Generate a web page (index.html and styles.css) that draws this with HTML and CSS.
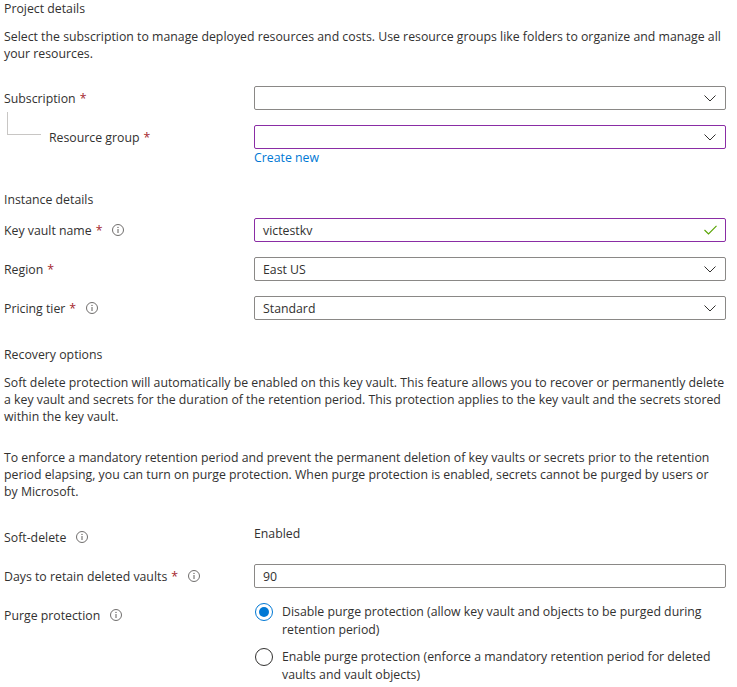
FILE: index.html
```html
<!DOCTYPE html>
<html lang="en">
<head>
<meta charset="utf-8">
<title>Create a key vault</title>
<link rel="stylesheet" href="styles.css">
</head>
<body>
<main class="form">
  <h2 class="section-title">Project details</h2>
  <p class="desc desc-first">Select the subscription to manage deployed resources and costs. Use resource groups like folders to organize and manage all<br>your resources.</p>

  <div class="row row-gap-lg">
    <div class="label">Subscription <span class="req">*</span></div>
    <div class="field">
      <div class="control">
        <span class="value"></span>
        <svg class="chevron" viewBox="0 0 12 7" width="12" height="7"><polyline points="0.5,0.5 6,6 11.5,0.5" fill="none" stroke="#323130" stroke-width="1"/></svg>
      </div>
    </div>
  </div>

  <div class="row row-gap">
    <div class="label label-child">Resource group <span class="req">*</span></div>
    <div class="field">
      <div class="control control-invalid">
        <span class="value"></span>
        <svg class="chevron" viewBox="0 0 12 7" width="12" height="7"><polyline points="0.5,0.5 6,6 11.5,0.5" fill="none" stroke="#323130" stroke-width="1"/></svg>
      </div>
      <a class="link" href="#">Create new</a>
    </div>
  </div>

  <h2 class="section-title section-gap">Instance details</h2>

  <div class="row row-gap-sm">
    <div class="label">Key vault name <span class="req">*</span>
      <svg class="info" viewBox="0 0 12 12" width="12" height="12"><circle cx="6" cy="6" r="5.5" fill="none" stroke="#605e5c" stroke-width="0.9"/><line x1="6" y1="5" x2="6" y2="9" stroke="#605e5c" stroke-width="1"/><circle cx="6" cy="3.4" r="0.65" fill="#605e5c"/></svg>
    </div>
    <div class="field">
      <div class="control control-invalid">
        <span class="value">victestkv</span>
        <svg class="check" viewBox="0 0 13 10" width="13" height="10"><polyline points="0.5,5 4.5,9 12.5,0.8" fill="none" stroke="#57a300" stroke-width="1.1"/></svg>
      </div>
    </div>
  </div>

  <div class="row row-gap">
    <div class="label">Region <span class="req">*</span></div>
    <div class="field">
      <div class="control">
        <span class="value">East US</span>
        <svg class="chevron" viewBox="0 0 12 7" width="12" height="7"><polyline points="0.5,0.5 6,6 11.5,0.5" fill="none" stroke="#323130" stroke-width="1"/></svg>
      </div>
    </div>
  </div>

  <div class="row row-gap">
    <div class="label">Pricing tier <span class="req">*</span>
      <svg class="info" viewBox="0 0 12 12" width="12" height="12"><circle cx="6" cy="6" r="5.5" fill="none" stroke="#605e5c" stroke-width="0.9"/><line x1="6" y1="5" x2="6" y2="9" stroke="#605e5c" stroke-width="1"/><circle cx="6" cy="3.4" r="0.65" fill="#605e5c"/></svg>
    </div>
    <div class="field">
      <div class="control">
        <span class="value">Standard</span>
        <svg class="chevron" viewBox="0 0 12 7" width="12" height="7"><polyline points="0.5,0.5 6,6 11.5,0.5" fill="none" stroke="#323130" stroke-width="1"/></svg>
      </div>
    </div>
  </div>

  <h2 class="section-title section-gap-lg">Recovery options</h2>
  <p class="desc desc-first">Soft delete protection will automatically be enabled on this key vault. This feature allows you to recover or permanently delete<br>a key vault and secrets for the duration of the retention period. This protection applies to the key vault and the secrets stored<br>within the key vault.</p>
  <p class="desc desc-second">To enforce a mandatory retention period and prevent the permanent deletion of key vaults or secrets prior to the retention<br>period elapsing, you can turn on purge protection. When purge protection is enabled, secrets cannot be purged by users or<br>by Microsoft.</p>

  <div class="row row-gap-xl">
    <div class="label">Soft-delete
      <svg class="info" viewBox="0 0 12 12" width="12" height="12"><circle cx="6" cy="6" r="5.5" fill="none" stroke="#605e5c" stroke-width="0.9"/><line x1="6" y1="5" x2="6" y2="9" stroke="#605e5c" stroke-width="1"/><circle cx="6" cy="3.4" r="0.65" fill="#605e5c"/></svg>
    </div>
    <div class="field">
      <div class="static">Enabled</div>
    </div>
  </div>

  <div class="row row-gap">
    <div class="label">Days to retain deleted vaults <span class="req">*</span>
      <svg class="info" viewBox="0 0 12 12" width="12" height="12"><circle cx="6" cy="6" r="5.5" fill="none" stroke="#605e5c" stroke-width="0.9"/><line x1="6" y1="5" x2="6" y2="9" stroke="#605e5c" stroke-width="1"/><circle cx="6" cy="3.4" r="0.65" fill="#605e5c"/></svg>
    </div>
    <div class="field">
      <div class="control">
        <span class="value">90</span>
      </div>
    </div>
  </div>

  <div class="row row-gap">
    <div class="label">Purge protection
      <svg class="info" viewBox="0 0 12 12" width="12" height="12"><circle cx="6" cy="6" r="5.5" fill="none" stroke="#605e5c" stroke-width="0.9"/><line x1="6" y1="5" x2="6" y2="9" stroke="#605e5c" stroke-width="1"/><circle cx="6" cy="3.4" r="0.65" fill="#605e5c"/></svg>
    </div>
    <div class="field radios">
      <div class="radio-option">
        <span class="radio radio-checked"></span>
        <span class="radio-text">Disable purge protection (allow key vault and objects to be purged during<br>retention period)</span>
      </div>
      <div class="radio-option">
        <span class="radio"></span>
        <span class="radio-text">Enable purge protection (enforce a mandatory retention period for deleted<br>vaults and vault objects)</span>
      </div>
    </div>
  </div>
</main>
</body>
</html>
```

FILE: styles.css
```css
* { box-sizing: border-box; }

html, body {
  margin: 0;
  padding: 0;
  background: #ffffff;
}

body {
  font-family: "Open Sans", "Noto Sans", "Liberation Sans", sans-serif;
  font-size: 12.3px;
  line-height: 17px;
  color: #323130;
}

.form {
  width: 722px;
  margin-left: 4px;
}

.section-title {
  margin: 0;
  font-size: 12.3px;
  font-weight: 400;
  line-height: 17px;
}

.section-gap { margin-top: 25px; }
.section-gap-lg { margin-top: 26px; }

.desc {
  margin: 0;
  white-space: nowrap;
}

.desc-first { margin-top: 11px; }
.desc-second { margin-top: 24px; }

.row {
  display: grid;
  grid-template-columns: 250px 472px;
  align-items: start;
}

.row-gap-sm { margin-top: 10px; }
.row-gap { margin-top: 15px; }
.row-gap-lg { margin-top: 24px; }
.row-gap-xl { margin-top: 25px; }

.label {
  display: flex;
  align-items: center;
  height: 24px;
  white-space: nowrap;
}

.label-child {
  position: relative;
  padding-left: 45px;
}

.label-child::before {
  content: "";
  position: absolute;
  left: 3px;
  top: -13px;
  width: 33px;
  height: 22px;
  border-left: 1px solid #c8c6c4;
  border-bottom: 1px solid #c8c6c4;
}

.req {
  color: #a4262c;
  margin-left: 4px;
}

.info {
  margin-left: 10px;
  flex: none;
}

.field {
  display: flex;
  flex-direction: column;
}

.control {
  height: 24px;
  border: 1px solid #8a8886;
  border-radius: 2px;
  display: flex;
  align-items: center;
  padding: 0 9px 0 8px;
}

.control-invalid {
  border-color: #8a2da5;
}

.value {
  flex: 1;
  white-space: nowrap;
}

.chevron { flex: none; }
.check { flex: none; margin-right: -1px; }

.link {
  color: #0078d4;
  text-decoration: none;
  line-height: 17px;
  align-self: flex-start;
}

.static {
  line-height: 17px;
}

.radios {
  gap: 9px;
}

.radio-option {
  display: flex;
  align-items: flex-start;
}

.radio {
  flex: none;
  width: 18px;
  height: 18px;
  margin-left: 1px;
  margin-right: 9px;
  border: 1px solid #323130;
  border-radius: 50%;
  display: flex;
  align-items: center;
  justify-content: center;
}

.radio-checked {
  border-color: #0078d4;
}

.radio-checked::after {
  content: "";
  width: 10px;
  height: 10px;
  border-radius: 50%;
  background: #0078d4;
}

.radio-text {
  line-height: 18px;
  white-space: nowrap;
}
```
